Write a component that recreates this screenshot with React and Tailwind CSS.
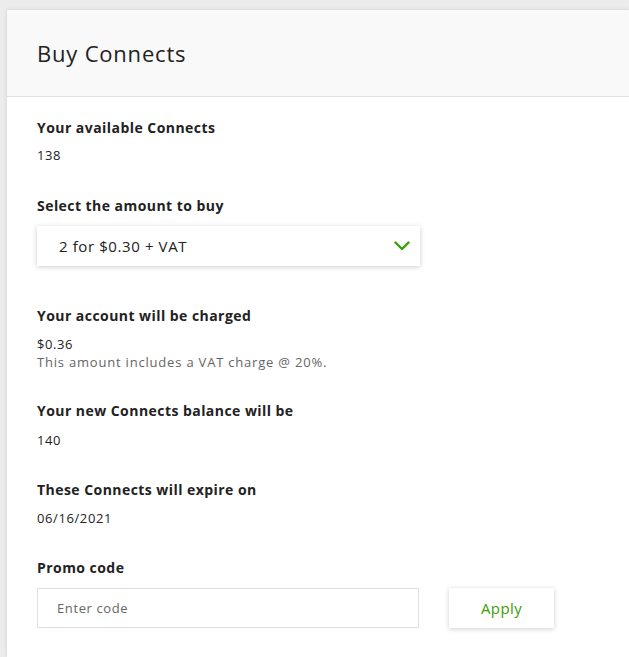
import React, { useState } from 'react';

function Field({ label, children, className = '' }) {
  return (
    <div className={className}>
      <h4 className="text-[14px] font-bold text-[#222] leading-[20px] tracking-[0.45px]">{label}</h4>
      {children}
    </div>
  );
}

export default function App() {
  const [amount] = useState('2 for $0.30 + VAT');
  const [promo, setPromo] = useState('');

  return (
    <div className="min-h-[657px] bg-[#ececec] pt-[10px] pl-[7px] font-['Open_Sans',sans-serif] text-[#222]">
      <div className="bg-white min-h-[647px] shadow-[0_0_4px_rgba(0,0,0,0.12)]">
        {/* Header */}
        <div className="h-[87px] bg-[#f9f9f9] border-b border-[#e0e0e0] flex items-center pl-[30px]">
          <h2 className="text-[22px] font-normal text-[#222] tracking-[0.8px]">Buy Connects</h2>
        </div>

        {/* Body */}
        <div className="pl-[30px] pt-[21px] tracking-[0.6px]">
          <Field label="Your available Connects">
            <p className="text-[13px] mt-[8px] leading-[18px]">138</p>
          </Field>

          <Field label="Select the amount to buy" className="mt-[32px]">
            <div className="mt-[10px] w-[383px] h-[40px] bg-white shadow-[0_1px_5px_rgba(0,0,0,0.2)] flex items-center justify-between pl-[22px] pr-[10px]">
              <span className="text-[15px]">{amount}</span>
              <svg width="16" height="10" viewBox="0 0 16 10" fill="none">
                <path d="M1.5 1.5 L8 8 L14.5 1.5" stroke="#37a000" strokeWidth="2.4" strokeLinecap="round" strokeLinejoin="round" />
              </svg>
            </div>
          </Field>

          <Field label="Your account will be charged" className="mt-[40px]">
            <p className="text-[13px] mt-[9px] leading-[18px]">$0.36</p>
            <p className="text-[13px] leading-[18px] text-[#656565] tracking-[0.8px]">This amount includes a VAT charge @ 20%.</p>
          </Field>

          <Field label="Your new Connects balance will be" className="mt-[30px]">
            <p className="text-[13px] mt-[10px] leading-[18px]">140</p>
          </Field>

          <Field label="These Connects will expire on" className="mt-[31px]">
            <p className="text-[13px] mt-[9px] leading-[18px]">06/16/2021</p>
          </Field>

          <Field label="Promo code" className="mt-[31px]">
            <div className="mt-[10px] flex items-center">
              <input
                type="text"
                value={promo}
                onChange={(e) => setPromo(e.target.value)}
                placeholder="Enter code"
                className="w-[382px] h-[40px] border border-[#e0e0e0] bg-white pl-[19px] text-[13px] tracking-[0.6px] placeholder-[#656565] outline-none"
              />
              <button className="ml-[30px] w-[105px] h-[40px] bg-white shadow-[0_1px_5px_rgba(0,0,0,0.2)] text-[15px] text-[#37a000] font-medium tracking-[0.4px]">
                Apply
              </button>
            </div>
          </Field>
        </div>
      </div>
    </div>
  );
}
